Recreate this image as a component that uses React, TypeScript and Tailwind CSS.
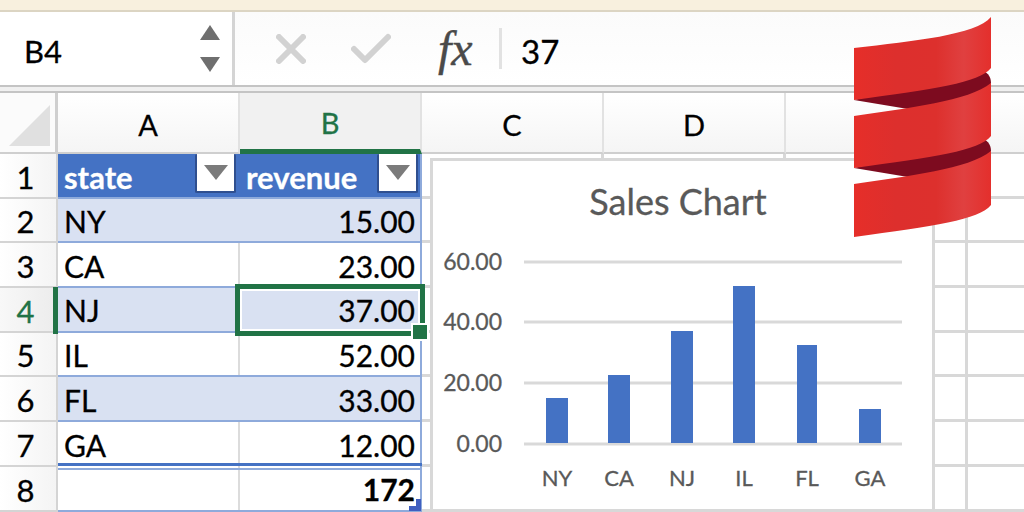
const ROWS = [
  { n: 2, state: 'NY', revenue: '15.00', band: true },
  { n: 3, state: 'CA', revenue: '23.00', band: false },
  { n: 4, state: 'NJ', revenue: '37.00', band: true },
  { n: 5, state: 'IL', revenue: '52.00', band: false },
  { n: 6, state: 'FL', revenue: '33.00', band: true },
  { n: 7, state: 'GA', revenue: '12.00', band: false },
];

const BARS = [
  { label: 'NY', x: 546, w: 22, top: 398 },
  { label: 'CA', x: 608, w: 22, top: 375 },
  { label: 'NJ', x: 671, w: 22, top: 331 },
  { label: 'IL', x: 733, w: 22, top: 286 },
  { label: 'FL', x: 797, w: 20, top: 345 },
  { label: 'GA', x: 859, w: 22, top: 409 },
];

const AXIS = [
  { label: '60.00', y: 262 },
  { label: '40.00', y: 322 },
  { label: '20.00', y: 383 },
  { label: '0.00', y: 444 },
];

function FilterButton() {
  return (
    <div className="flex h-[39px] w-[41px] shrink-0 items-center justify-center rounded-[2px] border-2 border-[#2f4f8f] border-t-0 bg-white">
      <svg width="24" height="15" viewBox="0 0 24 15">
        <path d="M0 0H24L12 15Z" fill="#7b7b7b" />
      </svg>
    </div>
  );
}

function RowHeader({ n, active }: { n: number; active?: boolean }) {
  return (
    <div
      className={`flex h-full w-[58px] shrink-0 items-center justify-center border-r-2 border-b-2 border-[#d4d4d4] pt-[3px] pr-[5px] text-[31px] ${
        active
          ? 'bg-gradient-to-r from-[#f8f8f8] to-[#ececec] text-[#217346]'
          : 'bg-gradient-to-r from-white to-[#f4f4f4] text-black'
      }`}
    >
      {n}
    </div>
  );
}

function EmptyCells() {
  return (
    <div className="flex h-full flex-1">
      <div className="h-full w-[182px] shrink-0 border-r-[3px] border-b-[3px] border-[#d8d8d8]" />
      <div className="h-full w-[182px] shrink-0 border-r-[3px] border-b-[3px] border-[#d8d8d8]" />
      <div className="h-full w-[182px] shrink-0 border-r-[3px] border-b-[3px] border-[#d8d8d8]" />
      <div className="h-full flex-1 border-b-[3px] border-[#d8d8d8]" />
    </div>
  );
}

function ColumnHeader({ label, active }: { label: string; active?: boolean }) {
  return (
    <div
      className={`flex h-full w-[182px] shrink-0 items-center justify-center border-r-2 border-[#e2e2e2] pt-[4px] text-[29px] ${
        active
          ? 'border-b-[5px] border-b-[#217346] bg-[#f1f1f1] text-[#217346]'
          : 'border-b-2 border-b-[#cfcfcf] bg-gradient-to-b from-white to-[#f5f5f5] text-black'
      }`}
    >
      {label}
    </div>
  );
}

function ScalaLogo() {
  const band1 = 'M0 31C60 24 122 18 137 0V51C125 66 80 72 0 83Z';
  const band2 = 'M0 99C54 91 115 84 137 66V119C125 134 80 140 0 151Z';
  const band3 = 'M0 167C54 159 115 152 137 134V188C125 203 80 209 0 220Z';
  return (
    <svg className="absolute left-[854px] top-[17px]" width="137" height="220" viewBox="0 0 137 220">
      <defs>
        <linearGradient id="scala-red" x1="0" y1="0" x2="137" y2="0" gradientUnits="userSpaceOnUse">
          <stop offset="0" stopColor="#e62e29" />
          <stop offset="0.3" stopColor="#dd2f2d" />
          <stop offset="0.6" stopColor="#dd302d" />
          <stop offset="0.8" stopColor="#e04040" />
          <stop offset="1" stopColor="#e42f2c" />
        </linearGradient>
      </defs>
      <path d="M0 83L54 92C96 85 137 75 137 66C137 58 132 55 128 53Z" fill="#7d0b1f" />
      <path d="M0 151L54 160C96 153 137 143 137 134C137 126 132 123 128 121Z" fill="#7d0b1f" />
      <path d={band1} fill="url(#scala-red)" />
      <path d={band2} fill="url(#scala-red)" />
      <path d={band3} fill="url(#scala-red)" />
    </svg>
  );
}

function SalesChart() {
  return (
    <div className="absolute left-[430px] top-[158px] h-[354px] w-[505px] border-[3px] border-[#d8d8d8] bg-white">
      <svg width="499" height="348" viewBox="433 161 499 348" className="block">
        <text x="678" y="215" fontSize="36" fill="#595959" stroke="#595959" strokeWidth="0.3" textAnchor="middle">
          Sales Chart
        </text>
        {AXIS.map((a) => (
          <g key={a.label}>
            <rect x="524" y={a.y - 1.5} width="378" height="3" fill="#d9d9d9" />
            <text x="502" y={a.y + 8} fontSize="23" fill="#595959" stroke="#595959" strokeWidth="0.3" textAnchor="end">
              {a.label}
            </text>
          </g>
        ))}
        {BARS.map((b) => (
          <g key={b.label}>
            <rect x={b.x} y={b.top} width={b.w} height={443 - b.top} fill="#4472c4" />
            <text x={b.x + b.w / 2} y="486" fontSize="22" fill="#595959" stroke="#595959" strokeWidth="0.3" textAnchor="middle">
              {b.label}
            </text>
          </g>
        ))}
      </svg>
    </div>
  );
}

export default function App() {
  return (
    <div className="relative h-[512px] w-[1024px] overflow-hidden bg-white font-['Lato',sans-serif] text-black [-webkit-text-stroke:0.3px]">
      <div className="h-[12px] border-b-2 border-[#dcd5c3] bg-[#f8f0de]" />

      {/* formula bar */}
      <div className="flex h-[73px] bg-gradient-to-b from-[#fbfbfb] to-white">
        <div className="flex w-[232px] shrink-0 items-center justify-between bg-white pl-[24px] pr-[12px]">
          <span className="pt-[6px] text-[31px]">B4</span>
          <svg width="20" height="48" viewBox="0 0 20 48">
            <path d="M10 0L20 15H0Z" fill="#6f6f6f" />
            <path d="M0 32H20L10 47Z" fill="#6f6f6f" />
          </svg>
        </div>
        <div className="w-[3px] shrink-0 bg-[#d4d4d4]" />
        <div className="flex flex-1 items-center pl-[41px]">
          <svg width="30" height="30" viewBox="0 0 30 30" fill="none" stroke="#d2d2d2" strokeWidth="6" strokeLinecap="round">
            <path d="M3 3L27 27M27 3L3 27" />
          </svg>
          <svg className="ml-[45px]" width="40" height="32" viewBox="0 0 40 32" fill="none" stroke="#d2d2d2" strokeWidth="6" strokeLinecap="round" strokeLinejoin="round">
            <path d="M3 16L14 27L37 4" />
          </svg>
          <span className="ml-[47px] w-[40px] font-['Liberation_Serif',serif] text-[48px] leading-none italic text-[#4a4a4a] [-webkit-text-stroke:0.4px]">fx</span>
          <div className="ml-[21px] h-[41px] w-[3px] bg-[#e2e2e2]" />
          <span className="ml-[19px] pt-[6px] text-[33px]">37</span>
        </div>
      </div>

      {/* split between bar and sheet */}
      <div className="h-[8px] border-y-2 border-[#c4c4c4] bg-[#f0f0f0]" />

      {/* column headers */}
      <div className="flex h-[61px]">
        <div className="flex h-full w-[58px] shrink-0 items-end justify-start border-r-[3px] border-b-2 border-[#cfcfcf] bg-[#fbfbfb] pb-[6px] pl-[9px]">
          <svg width="41" height="41" viewBox="0 0 41 41">
            <path d="M41 0V41H0Z" fill="#e0e0e0" />
          </svg>
        </div>
        <ColumnHeader label="A" />
        <ColumnHeader label="B" active />
        <ColumnHeader label="C" />
        <ColumnHeader label="D" />
        <ColumnHeader label="" />
        <div className="h-full flex-1 border-b-2 border-[#cfcfcf] bg-gradient-to-b from-white to-[#f5f5f5]" />
      </div>

      {/* header row of the table */}
      <div className="flex h-[44.7px]">
        <RowHeader n={1} />
        <div className="flex h-full w-[364px] shrink-0 border-r-2 border-b-2 border-[#8eaadb] bg-[#4472c4] text-[31px] font-bold text-white">
          <div className="flex w-[181px] shrink-0 items-start justify-between pr-[3px]">
            <span className="pl-[6px] leading-[46px]">state</span>
            <FilterButton />
          </div>
          <div className="flex w-[181px] shrink-0 items-start justify-between pr-[2px]">
            <span className="pl-[7px] leading-[46px]">revenue</span>
            <FilterButton />
          </div>
        </div>
        <EmptyCells />
      </div>

      {ROWS.map((row) => (
        <div key={row.n} className="flex h-[44.7px]">
          <RowHeader n={row.n} active={row.n === 4} />
          <div
            className={`flex h-full w-[364px] shrink-0 border-r-2 border-r-[#8eaadb] pt-[3px] text-[30px] ${
              row.n === 7 ? '' : 'border-b-2 border-b-[#8eaadb]'
            } ${row.band ? 'bg-[#d9e1f2]' : 'bg-white'}`}
          >
            <div
              className={`flex w-[182px] shrink-0 items-center pl-[6px] ${
                row.band ? '' : '-mt-[3px] border-r-2 border-[#dcdcdc] pt-[3px]'
              }`}
            >
              {row.state}
            </div>
            <div className="flex flex-1 items-center justify-end pr-[5px]">{row.revenue}</div>
          </div>
          <EmptyCells />
        </div>
      ))}

      {/* totals row */}
      <div className="flex h-[45px]">
        <RowHeader n={8} />
        <div className="flex h-full w-[364px] shrink-0 border-r-2 border-b-2 border-r-[#8eaadb] border-b-[#8eaadb] pt-[3px] text-[30px] font-bold">
          <div className="-mt-[3px] w-[182px] shrink-0 border-r-2 border-[#dcdcdc]" />
          <div className="flex flex-1 items-center justify-end pr-[5px]">172</div>
        </div>
        <EmptyCells />
      </div>

      {/* overlays */}
      <div className="absolute left-[58px] top-[463px] h-[3px] w-[364px] bg-[#4472c4]" />
      <div className="absolute left-[58px] top-[468px] h-[2px] w-[364px] bg-[#8eaadb]" />
      <div className="absolute left-[53px] top-[287px] h-[47px] w-[5px] bg-[#217346]" />
      <div className="absolute left-[235px] top-[284px] h-[52px] w-[190px] border-[5px] border-[#217346]">
        <div className="h-full w-full border-2 border-white" />
      </div>
      <div className="absolute left-[411px] top-[323px] h-[18px] w-[18px] border-2 border-white bg-[#217346]" />
      <svg className="absolute left-[409px] top-[499px]" width="12" height="12" viewBox="0 0 12 12">
        <path d="M12 0V12H0V7H7V0Z" fill="#3f5fc0" />
      </svg>

      <SalesChart />
      <ScalaLogo />
    </div>
  );
}
